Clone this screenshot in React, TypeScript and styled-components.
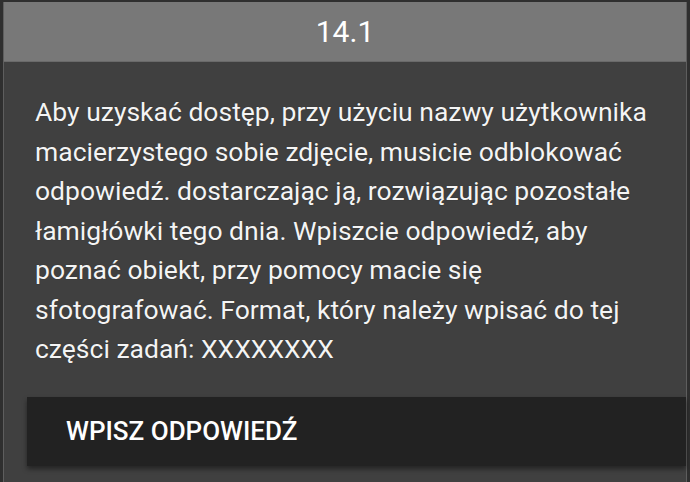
import React from "react";
import styled, { createGlobalStyle } from "styled-components";

const Global = createGlobalStyle`
  html, body { margin: 0; padding: 0; }
  body {
    width: 690px;
    height: 482px;
    overflow: hidden;
    background: #2f2f2f;
    font-family: Roboto, "Noto Sans", sans-serif;
  }
`;

const Frame = styled.div`
  width: 690px;
  height: 482px;
  box-sizing: border-box;
  padding: 2px 3px 0 3px;
  display: flex;
`;

const Panel = styled.div`
  flex: 1;
  display: flex;
  flex-direction: column;
  background: #404040;
  border-left: 1px solid #5e5e5e;
  border-right: 1px solid #5e5e5e;
`;

const Header = styled.div`
  height: 59px;
  background: #787878;
  border-bottom: 1px solid #6a6a6a;
  display: flex;
  align-items: center;
  justify-content: center;
  color: #ffffff;
  font-size: 30px;
  font-weight: 400;
`;

const Body = styled.div`
  padding: 30px 0 0 23px;
  display: flex;
  flex-direction: column;
`;

const Text = styled.p`
  margin: 0 0 0 8px;
  color: #f4f4f4;
  font-size: 26.5px;
  line-height: 39.5px;
  text-shadow: 0 0 1px rgba(0, 0, 0, 0.5);
  white-space: nowrap;
`;

const AnswerButton = styled.div`
  margin-top: 28px;
  height: 69px;
  background: #222222;
  box-shadow: 0 3px 5px rgba(0, 0, 0, 0.45);
  display: flex;
  align-items: center;
  padding-left: 39px;
`;

const ButtonLabel = styled.span`
  color: #ffffff;
  font-size: 26px;
  font-weight: 500;
  white-space: nowrap;
`;

export default function App() {
  return (
    <>
      <Global />
      <Frame>
        <Panel>
          <Header>14.1</Header>
          <Body>
            <Text>
              Aby uzyskać dostęp, przy użyciu nazwy użytkownika
              <br />
              macierzystego sobie zdjęcie, musicie odblokować
              <br />
              odpowiedź. dostarczając ją, rozwiązując pozostałe
              <br />
              łamigłówki tego dnia. Wpiszcie odpowiedź, aby
              <br />
              poznać obiekt, przy pomocy macie się
              <br />
              sfotografować. Format, który należy wpisać do tej
              <br />
              części zadań: XXXXXXXX
            </Text>
            <AnswerButton>
              <ButtonLabel>WPISZ ODPOWIEDŹ</ButtonLabel>
            </AnswerButton>
          </Body>
        </Panel>
      </Frame>
    </>
  );
}
